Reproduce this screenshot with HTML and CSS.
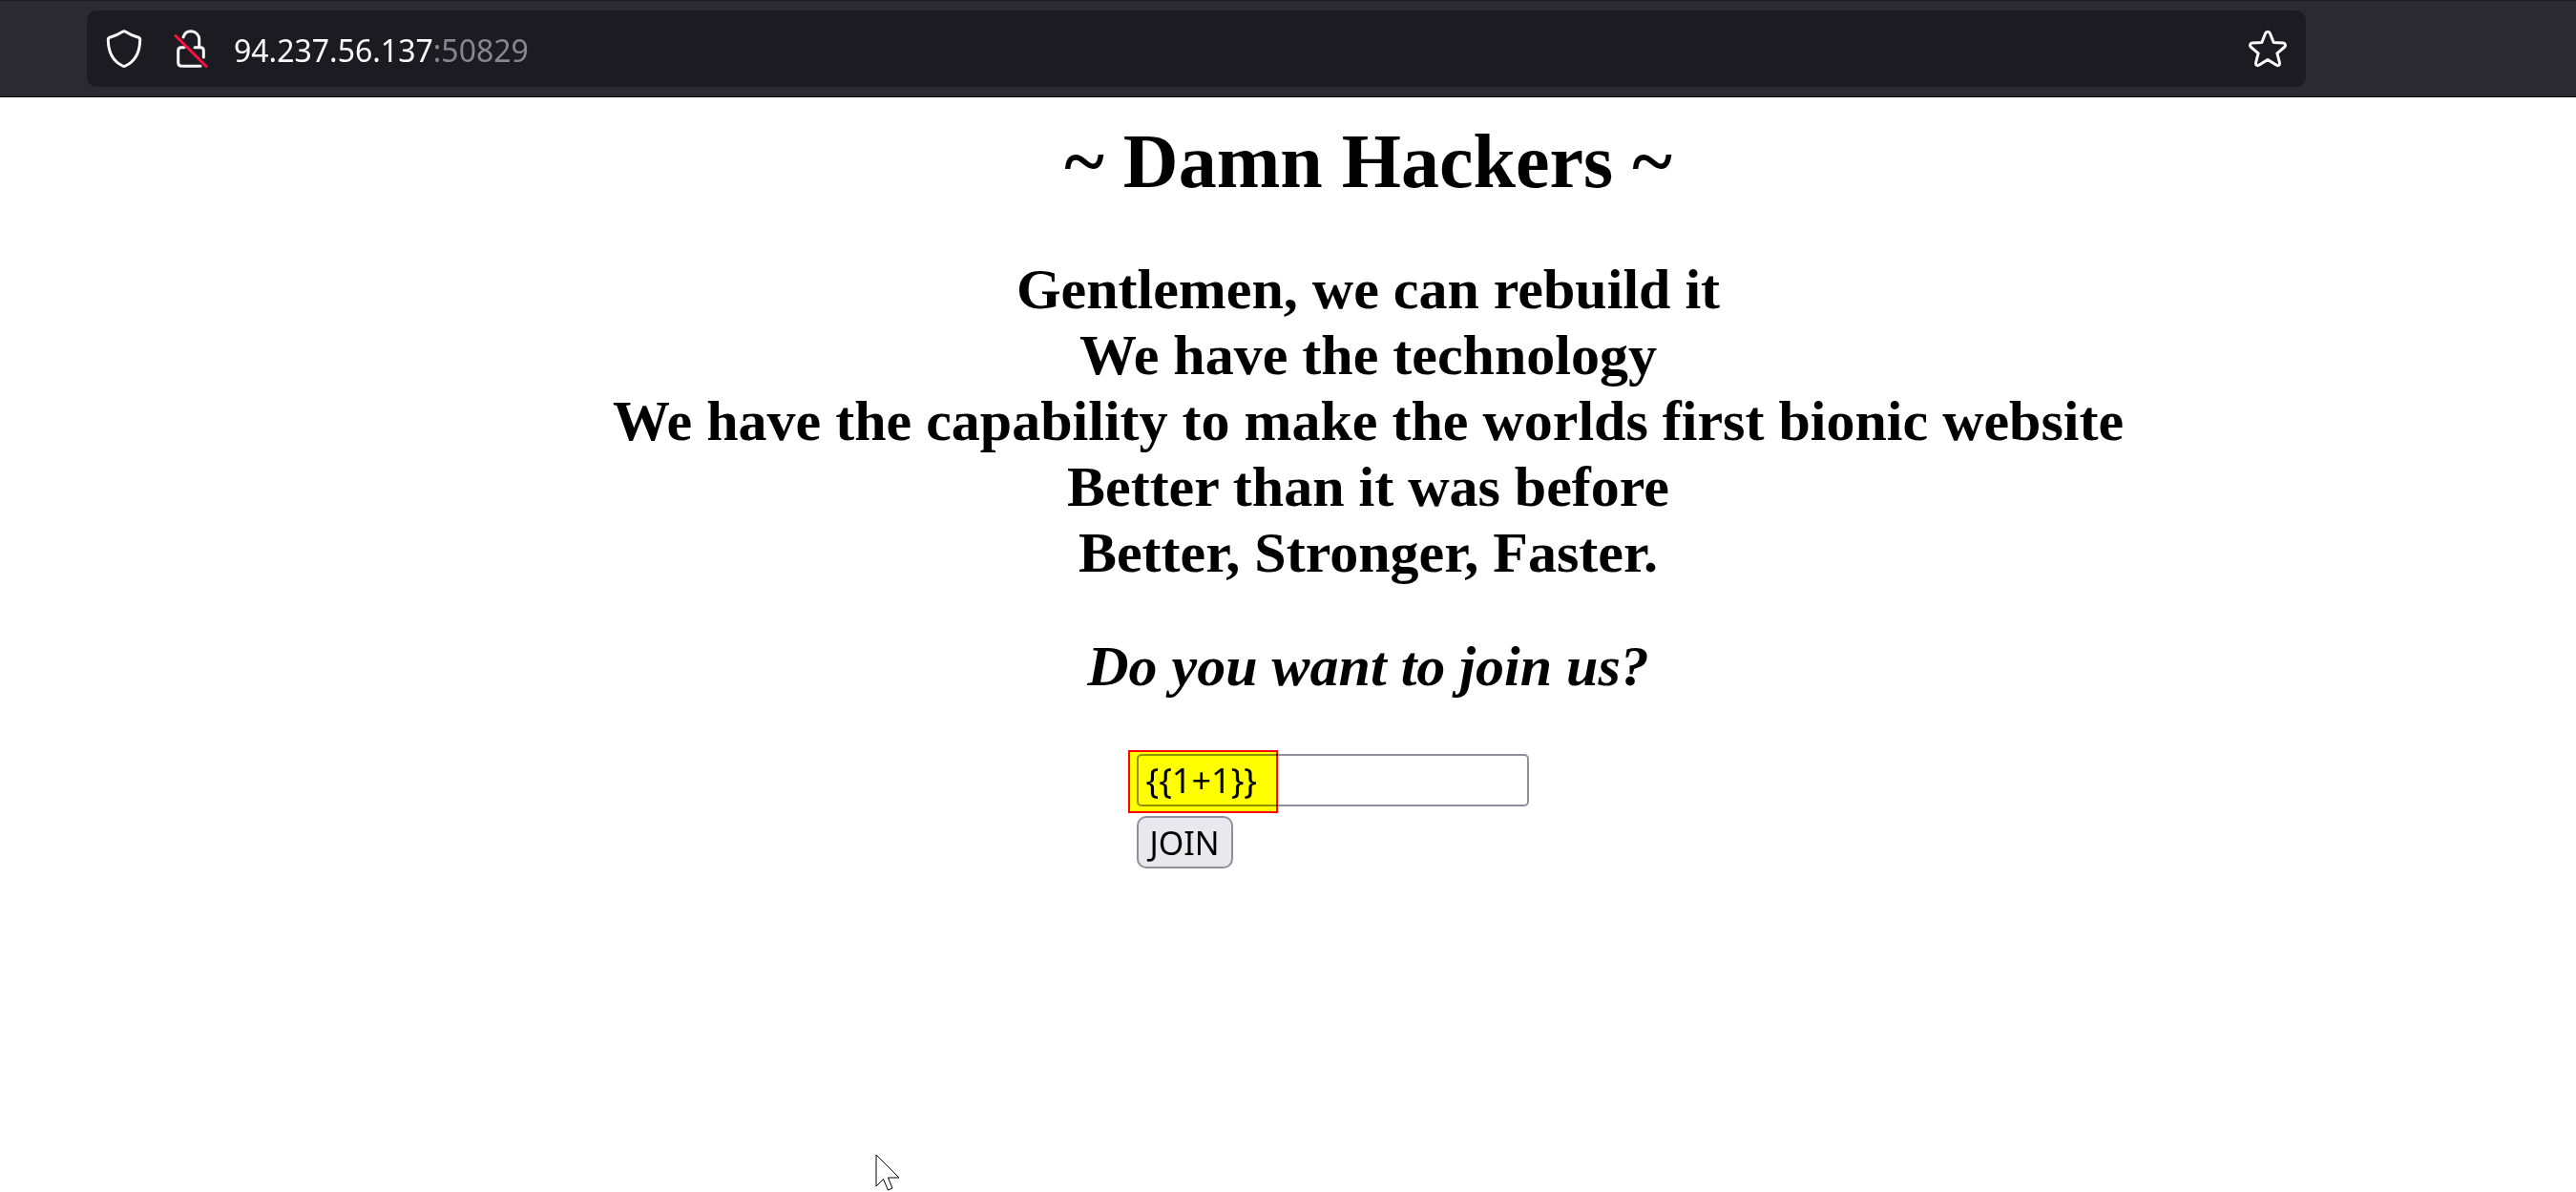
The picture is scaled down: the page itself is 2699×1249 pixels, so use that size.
FILE: index.html
```html
<!DOCTYPE html>
<html lang="en">
<head>
<meta charset="utf-8">
<title>Damn Hackers</title>
<link rel="stylesheet" href="styles.css">
</head>
<body>
<header class="toolbar">
  <div class="address">
    <button class="icon-button" type="button" aria-label="Tracking protection">
      <svg class="icon" viewBox="0 0 40 40"><path d="M20 1.7 Q20.8 1.7 21.6 2.2 Q28 6.4 35 8.2 Q36.8 8.8 36.7 11 C36.4 25 31 33.5 21.5 38 Q20 38.8 18.5 38 C9 33.5 3.6 25 3.3 11 Q3.2 8.8 5 8.2 Q12 6.4 18.4 2.2 Q19.2 1.7 20 1.7Z"/></svg>
    </button>
    <button class="icon-button" type="button" aria-label="Connection is not secure">
      <svg class="icon" viewBox="0 0 40 40">
        <path d="M12 8 C13 4.5 16 1.7 20 1.7 C25 1.7 28.7 5.5 28.7 10.5 V18.5"/>
        <path d="M13 18.7 H10 Q6.7 18.7 6.7 22 V34.5 Q6.7 38.3 10.5 38.3 H30"/>
        <path d="M24 18.7 H30 Q33.3 18.7 33.3 22 V29"/>
        <path class="slash" d="M4 6.5 L36 38.5"/>
      </svg>
    </button>
    <span class="url">94.237.56.137<span class="port">:50829</span></span>
    <button class="icon-button" type="button" aria-label="Bookmark this page">
      <svg class="icon" viewBox="0 0 40 40"><path d="M20 2.3 Q21.7 2.3 22.4 4 L26.2 13.5 L36 14.1 Q38 14.3 38.4 15.8 Q38.8 17.3 37.4 18.5 L29.9 24.8 L32.4 34.5 Q32.8 36.4 31.6 37.3 Q30.3 38.1 28.8 37.1 L20 31.5 L11.2 37.1 Q9.7 38.1 8.4 37.3 Q7.2 36.4 7.6 34.5 L10.1 24.8 L2.6 18.5 Q1.2 17.3 1.6 15.8 Q2 14.3 4 14.1 L13.8 13.5 L17.6 4 Q18.3 2.3 20 2.3Z"/></svg>
    </button>
  </div>
</header>
<main class="page">
  <h1 class="title">~ Damn Hackers ~</h1>
  <h2 class="text">Gentlemen, we can rebuild it<br>We have the technology<br>We have the capability to make the worlds first bionic website<br>Better than it was before<br>Better, Stronger, Faster.</h2>
  <h2 class="text question">Do you want to join us?</h2>
  <form class="join-form">
    <div class="field">
      <input class="answer" type="text" value="{{1+1}}" aria-label="Your answer">
      <span class="highlight"></span>
    </div>
    <button class="join" type="button">JOIN</button>
  </form>
</main>
<svg class="cursor" viewBox="0 0 28 40"><path d="M1 1 V34 L8.500 26.500 L13.500 38 L18 36 L13.500 25 H25 Z"/></svg>
</body>
</html>
```
FILE: styles.css
```css
* {
  box-sizing: border-box;
}

body {
  margin: 0;
  min-height: 100vh;
  position: relative;
  overflow: hidden;
  background: #fff;
  color: #000;
  font-family: "Liberation Serif", serif;
}

.toolbar {
  padding: 10px 283px 10px 91px;
  background: #2b2a33;
  border-top: 1px solid #1c1b22;
  border-bottom: 1px solid #0c0c0d;
}

.address {
  display: flex;
  align-items: center;
  height: 80px;
  padding: 0 20px 0 19px;
  border-radius: 10px;
  background: #1c1b22;
}

.icon-button {
  display: flex;
  padding: 0;
  border: 0;
  background: none;
}

.icon-button + .icon-button {
  margin-left: 30px;
}

.icon {
  width: 40px;
  height: 40px;
  fill: none;
  stroke: #fbfbfe;
  stroke-width: 3;
  stroke-linecap: round;
  stroke-linejoin: round;
}

.slash {
  stroke: #ff0f3f;
}

.url {
  flex: 1;
  padding: 4px 0 0 25px;
  color: #fbfbfe;
  font: 32px/48px "Noto Sans", sans-serif;
}

.port {
  color: #87868c;
}

.page {
  padding: 21px 0 0 168px;
}

.title,
.text {
  margin: 0 0 50px;
  text-align: center;
  font-weight: bold;
}

.title {
  margin-bottom: 54px;
  font-size: 80px;
  line-height: 92px;
}

.text {
  font-size: 60px;
  line-height: 69px;
}

.question {
  margin-bottom: 57px;
  font-style: italic;
}

.join-form {
  display: flex;
  flex-direction: column;
  align-items: flex-start;
  gap: 10px;
  width: 486px;
  margin: 0 auto;
}

.field {
  display: flex;
  position: relative;
}

.answer {
  width: 411px;
  height: 55px;
  padding: 0 8px;
  border: 2px solid #8f8f9d;
  border-radius: 5px;
  background: #fff;
  color: #000;
  font: 36px "Noto Sans", sans-serif;
}

.highlight {
  position: absolute;
  left: -9px;
  top: -4px;
  width: 157px;
  height: 66px;
  border: 2px solid #f00;
  background: #ff0;
  mix-blend-mode: multiply;
  pointer-events: none;
}

.join {
  height: 55px;
  padding: 0 12px;
  border: 2px solid #8f8f9d;
  border-radius: 10px;
  background: #e9e9ed;
  color: #000;
  font: 34px "Noto Sans", sans-serif;
}

.cursor {
  position: absolute;
  left: 917px;
  top: 1209px;
  width: 28px;
  height: 40px;
  fill: #fff;
  stroke: #000;
  stroke-width: 1;
}
```
